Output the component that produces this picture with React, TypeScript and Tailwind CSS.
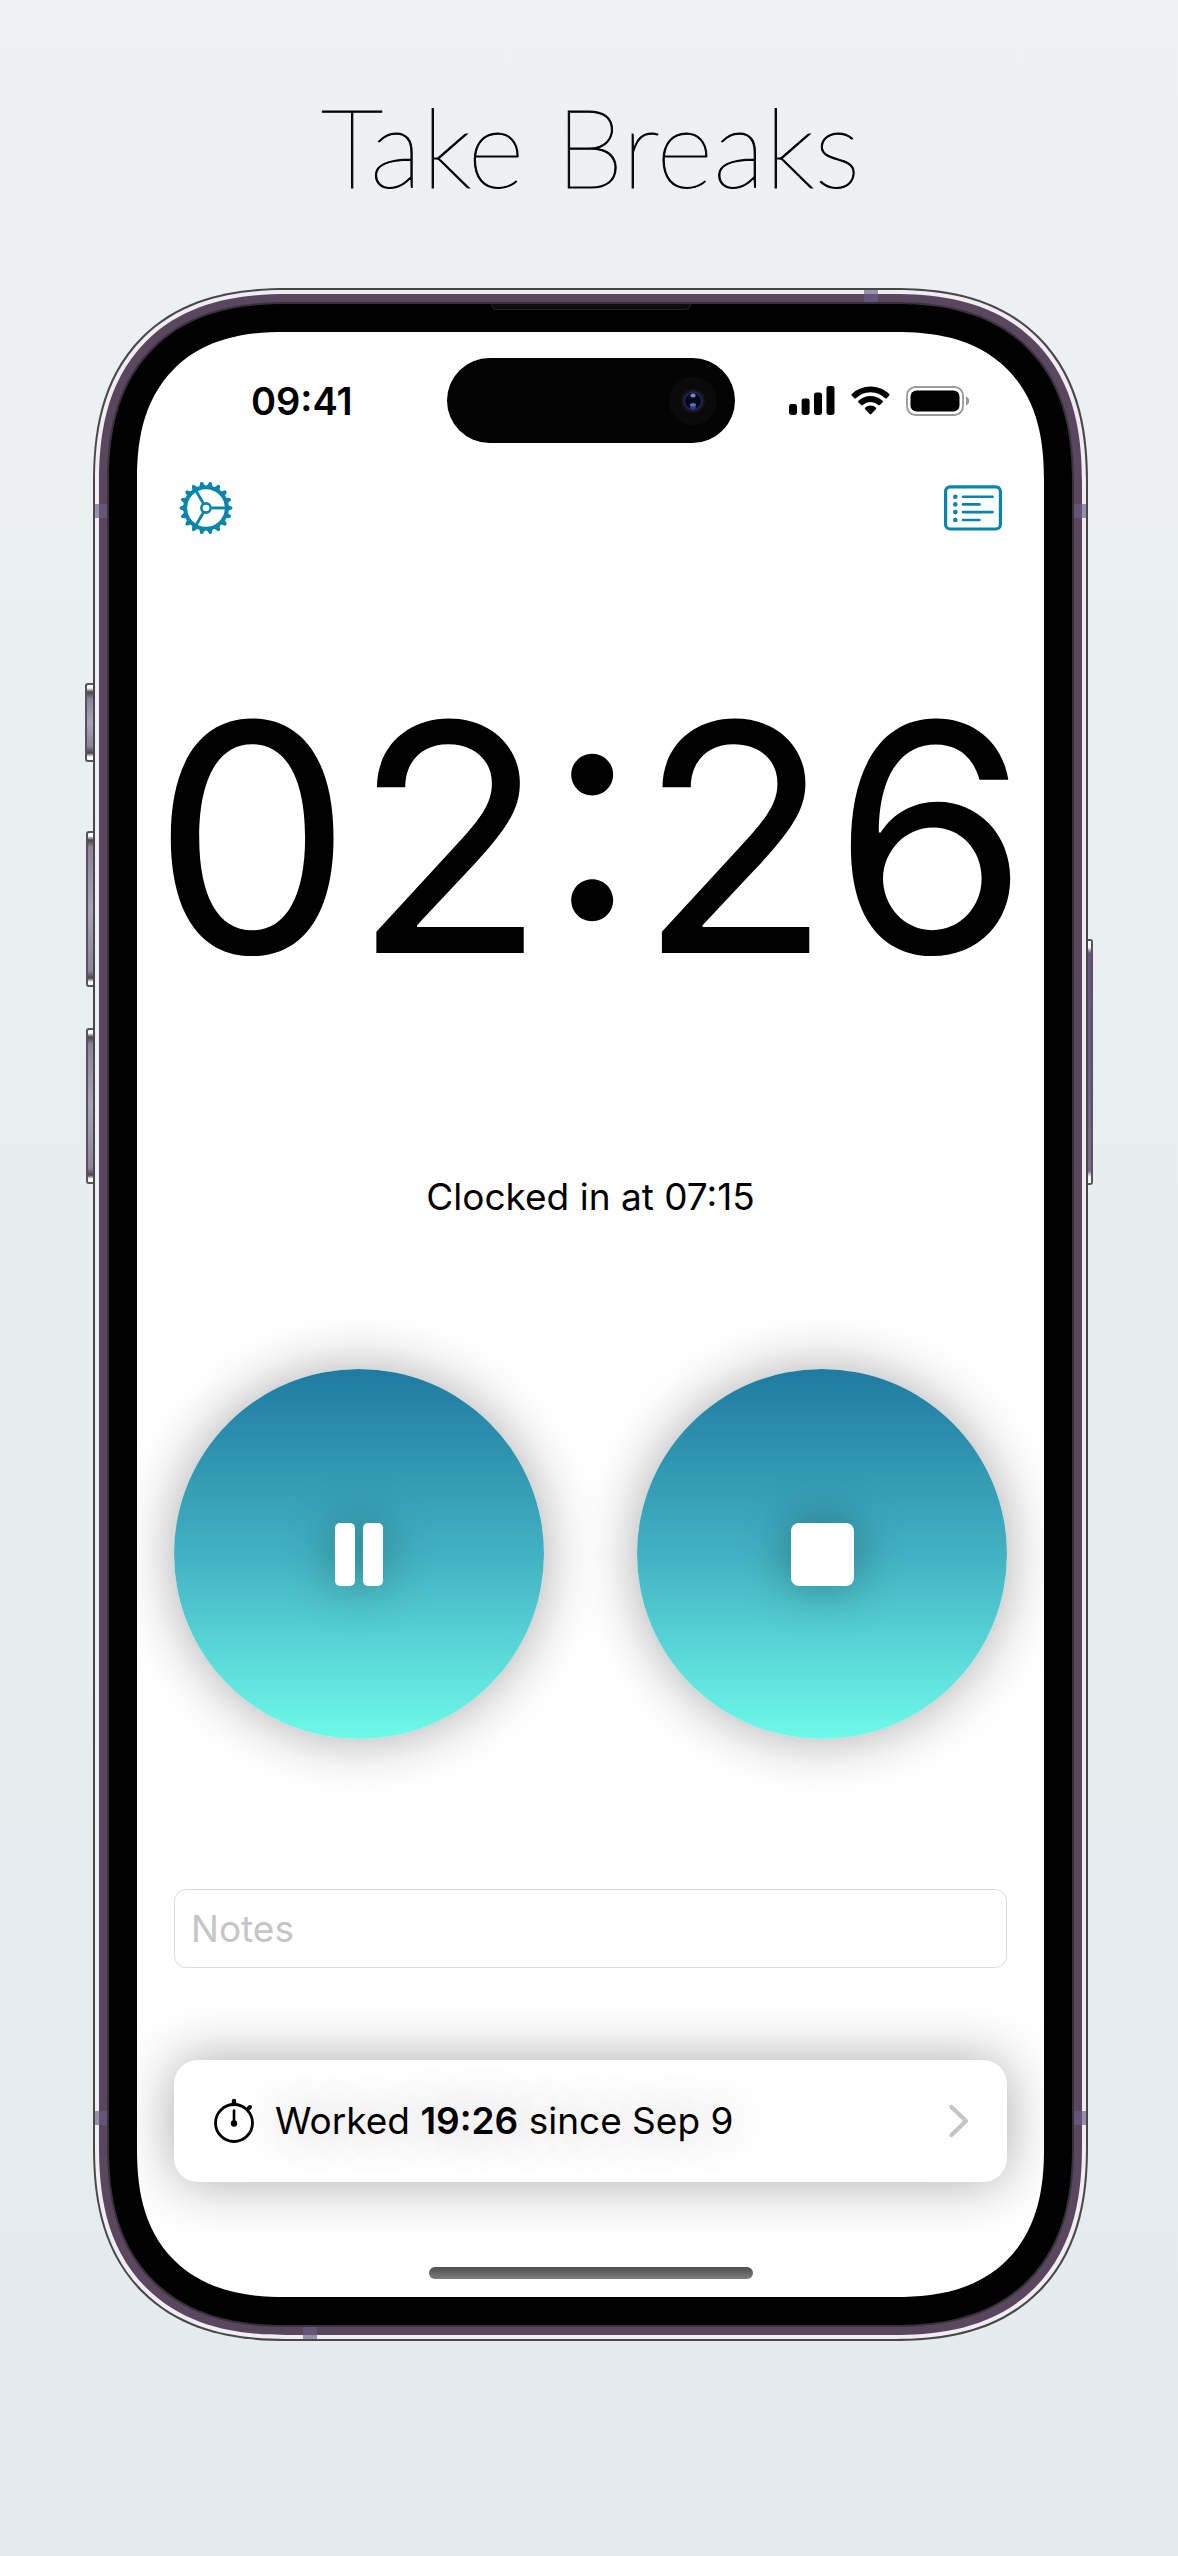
const TEETH = Array.from({ length: 18 }, (_, i) => i * 20);
const SPOKES = [0, 120, 240];

function GearIcon() {
  return (
    <svg viewBox="-27 -27 54 54" className="size-[54px]" fill="none" stroke="currentColor" aria-hidden="true">
      <circle r="20.8" strokeWidth="4" />
      <circle r="4.6" strokeWidth="2.6" />
      {SPOKES.map((a) => (
        <line key={a} x1="5.5" y1="0" x2="20" y2="0" strokeWidth="2.8" transform={`rotate(${a})`} />
      ))}
      {TEETH.map((a) => (
        <path
          key={a}
          d="M21.5 -2.4 L25.6 -0.7 V0.7 L21.5 2.4 Z"
          fill="currentColor"
          strokeWidth="1.4"
          strokeLinejoin="round"
          transform={`rotate(${a})`}
        />
      ))}
    </svg>
  );
}

function ListIcon() {
  return (
    <svg viewBox="0 0 58 46" className="h-[46px] w-[58px]" fill="none" stroke="currentColor" aria-hidden="true">
      <rect x="1.6" y="1.8" width="54.8" height="42.2" rx="4.5" strokeWidth="3.2" />
      {[11.7, 19.4, 27.1, 35].map((y, i) => (
        <g key={y}>
          <circle cx="11.3" cy={y} r="2.3" fill="currentColor" stroke="none" />
          <line x1="19" y1={y} x2={i % 2 ? 35.5 : 48.5} y2={y} strokeWidth="2.6" strokeLinecap="round" />
        </g>
      ))}
    </svg>
  );
}

function StatusIcons() {
  return (
    <div className="flex items-center gap-4 pr-5">
      <svg viewBox="0 0 46 29" className="h-[29px] w-[46px]" role="img" aria-label="Signal">
        <rect x="0" y="18" width="8" height="11" rx="2.4" />
        <rect x="12.6" y="12.5" width="8" height="16.5" rx="2.4" />
        <rect x="25" y="6.5" width="8" height="22.5" rx="2.4" />
        <rect x="37.5" y="0" width="8" height="29" rx="2.4" />
      </svg>
      <svg viewBox="0 0 39 29" className="h-[29px] w-[39px]" role="img" aria-label="Wi-Fi">
        <path d="M19.5 0.5c7.2 0 13.8 2.9 18.7 7.5.5.5.5 1.1 0 1.6l-2.5 2.6c-.4.4-1.1.4-1.6 0A21.3 21.3 0 0 0 19.5 6.2 21.3 21.3 0 0 0 4.9 12.2c-.5.4-1.2.4-1.6 0L.8 9.6c-.5-.5-.5-1.1 0-1.6A27.3 27.3 0 0 1 19.5.5Z" />
        <path d="M19.5 10c4.6 0 8.8 1.8 12 4.8.5.4.5 1.1 0 1.6l-2.7 2.6c-.4.4-1.1.4-1.5 0a11.4 11.4 0 0 0-15.6 0c-.4.4-1.1.4-1.5 0l-2.7-2.6c-.5-.5-.5-1.2 0-1.6a17.4 17.4 0 0 1 12-4.8Z" />
        <path d="M19.5 19.5c2 0 3.9.8 5.3 2.1.5.4.5 1.1 0 1.6l-4.5 4.9c-.4.5-1.2.5-1.6 0l-4.5-4.9c-.5-.5-.5-1.2 0-1.6a7.7 7.7 0 0 1 5.3-2.1Z" />
      </svg>
      <svg viewBox="0 0 64 30" className="h-[30px] w-16" role="img" aria-label="Battery">
        <rect x="1" y="1" width="56" height="28" rx="8.5" fill="none" stroke="#9a9a9a" strokeWidth="1.8" />
        <rect x="4.5" y="4.5" width="49" height="21" rx="6" />
        <path d="M60 10.5c2 .8 3.2 2.5 3.2 4.5s-1.2 3.7-3.2 4.5Z" fill="#9a9a9a" />
      </svg>
    </div>
  );
}

function StatusBar() {
  return (
    <div className="grid grid-cols-[1fr_288px_1fr] items-center pt-[26px]">
      <span className="pl-5 text-center text-[38px] leading-[44px] font-semibold">09:41</span>
      <div className="flex h-[85px] items-center justify-end rounded-full bg-[#030303] pr-[18px]">
        <svg viewBox="-24 -24 48 48" className="size-12" aria-hidden="true">
          <circle r="24" fill="#0a0a0a" />
          <circle r="12" fill="#151515" />
          <circle r="8.8" fill="#06061a" stroke="#1c2560" strokeWidth="1.8" />
          <ellipse cy="-5.6" rx="2.6" ry="2" fill="#8a86b8" />
          <ellipse cy="6" rx="3" ry="2.4" fill="#4a2a90" />
          <ellipse cy="3.8" rx="3" ry="1.8" fill="#3f7fa8" />
        </svg>
      </div>
      <div className="flex justify-center">
        <StatusIcons />
      </div>
    </div>
  );
}

const roundButton =
  "flex aspect-square w-[370px] items-center justify-center rounded-full bg-linear-to-b from-[#1f7ba0] via-[#42b1c2] to-[#6ffaea] shadow-[0_0_56px_rgba(0,0,0,0.34)]";
const glyphShadow = "drop-shadow-[0_0_24px_rgba(0,0,0,0.34)]";

function Screen() {
  return (
    <div className="overflow-hidden rounded-[121px] bg-white pb-[18px] supports-[corner-shape:squircle]:rounded-[148px] supports-[corner-shape:squircle]:[corner-shape:superellipse(1.27)]">
      <StatusBar />
      <nav className="mt-[38px] flex items-center justify-between px-[42px] text-[#0785aa]">
        <button type="button" aria-label="Settings">
          <GearIcon />
        </button>
        <button type="button" aria-label="Timesheet">
          <ListIcon />
        </button>
      </nav>
      <p className="mt-[153px] text-center text-[318px] leading-[300px] whitespace-nowrap">02:26</p>
      <div className="flex flex-col px-[37px]">
        <p className="mt-[185px] text-center text-[37px] leading-[48px]">Clocked in at 07:15</p>
        <div className="mt-[148px] flex justify-between">
          <button type="button" aria-label="Pause" className={roundButton}>
            <svg viewBox="0 0 48 63" className={`h-[63px] w-12 ${glyphShadow}`} fill="#fff" aria-hidden="true">
              <rect x="0" width="20" height="63" rx="5" />
              <rect x="28" width="20" height="63" rx="5" />
            </svg>
          </button>
          <button type="button" aria-label="Stop" className={roundButton}>
            <svg viewBox="0 0 63 63" className={`size-[63px] ${glyphShadow}`} fill="#fff" aria-hidden="true">
              <rect width="63" height="63" rx="8" />
            </svg>
          </button>
        </div>
        <input
          type="text"
          aria-label="Notes"
          placeholder="Notes"
          className="mt-[150px] h-[79px] w-full rounded-xl border border-[#dcdcdc] px-4 text-[37px] outline-none placeholder:text-[#c5c5c7]"
        />
        <button
          type="button"
          className="mt-[92px] flex h-[122px] items-center rounded-3xl bg-white pr-[38px] pl-[39px] text-left text-[37px] shadow-[0_0_56px_rgba(0,0,0,0.34)]"
        >
          <svg viewBox="0 0 42 46" className="h-[46px] w-[42px]" fill="none" stroke="#000" strokeLinecap="round" aria-hidden="true">
            <circle cx="21" cy="25" r="18.5" strokeWidth="2.8" />
            <line x1="21" y1="3" x2="21" y2="6" strokeWidth="4.5" />
            <line x1="35.5" y1="10.5" x2="37" y2="9" strokeWidth="4" />
            <line x1="21" y1="12.5" x2="21" y2="25" strokeWidth="2.6" />
            <circle cx="21" cy="25.5" r="3.2" fill="#000" stroke="none" />
          </svg>
          <span className="ml-5 flex-1 [text-shadow:0_0_48px_rgba(0,0,0,0.34)]">
            Worked <strong className="font-semibold">19:26</strong> since Sep 9
          </span>
          <svg viewBox="0 0 20 34" className="h-[34px] w-5" fill="none" stroke="#c4c4c6" strokeWidth="4.2" strokeLinecap="round" strokeLinejoin="round" aria-hidden="true">
            <path d="M2.5 3 17 17 2.5 31" />
          </svg>
        </button>
      </div>
      <div className="mx-auto mt-[85px] h-3 w-[324px] rounded-full bg-linear-to-b from-[#505050] to-[#7c7c7c]" />
    </div>
  );
}

const sideButton =
  "absolute rounded-l-[3px] border-2 border-r-0 border-[#55555a] bg-[linear-gradient(to_bottom,#fff_3px,#4a4452_7px,#8d8299_14px,#a8a2bb_50%,#8d8299_calc(100%-14px),#4a4452_calc(100%-7px),#fff_calc(100%-3px))]";
const band = "absolute bg-[#6a5f86]/65";

function Phone() {
  return (
    <div className="relative">
      <div className={`${sideButton} top-[395px] -left-2 h-[79px] w-2.5`} />
      <div className={`${sideButton} top-[543px] -left-[7px] h-[156px] w-2.5`} />
      <div className={`${sideButton} top-[740px] -left-[7px] h-[156px] w-2.5`} />
      <div className="absolute top-[651px] -right-[5px] h-[246px] w-2.5 rounded-r-[3px] border-2 border-l-0 border-[#55555a] bg-[linear-gradient(to_bottom,#fff_6px,#66557c_12px,#6a5c88_50%,#7c6a8a_calc(100%-12px),#fff_calc(100%-6px))]" />
      <div className="relative rounded-[165px] border-2 border-[#48484a] bg-[#f0edf1] p-1 supports-[corner-shape:squircle]:rounded-[195px] supports-[corner-shape:squircle]:[corner-shape:superellipse(1.27)]">
        <div className="rounded-[159px] bg-[#5a475f] p-2 supports-[corner-shape:squircle]:rounded-[189px] supports-[corner-shape:squircle]:[corner-shape:superellipse(1.27)]">
          <div className="rounded-[151px] bg-[#363338] p-0.5 supports-[corner-shape:squircle]:rounded-[181px] supports-[corner-shape:squircle]:[corner-shape:superellipse(1.27)]">
            <div className="rounded-[149px] bg-black p-7 supports-[corner-shape:squircle]:rounded-[179px] supports-[corner-shape:squircle]:[corner-shape:superellipse(1.27)]">
              <Screen />
            </div>
          </div>
        </div>
        <div className={`${band} top-[214px] left-0 h-3.5 w-3`} />
        <div className={`${band} top-[214px] right-0 h-3.5 w-3`} />
        <div className={`${band} bottom-[214px] left-0 h-3.5 w-3`} />
        <div className={`${band} right-0 bottom-[214px] h-3.5 w-3`} />
        <div className={`${band} top-0 right-[208px] h-3 w-3.5`} />
        <div className={`${band} bottom-0 left-[208px] h-3 w-3.5`} />
        <div className="absolute top-[14px] left-1/2 h-1.5 w-[200px] -translate-x-1/2 rounded-b-md border-x border-b border-[#222224] bg-[#0c0c0c]" />
      </div>
    </div>
  );
}

export default function App() {
  return (
    <main className="min-h-screen bg-linear-to-b from-[#edf1f4] to-[#e4eaed] pr-[90px] pb-[215px] pl-[93px] font-[Inter,'Liberation_Sans',sans-serif] text-black">
      <h1 className="pt-[75px] pb-[73px] text-center font-[Lato,'Liberation_Sans',sans-serif] text-[110px] leading-[140px] font-thin [-webkit-text-stroke:1px_black]">
        Take Breaks
      </h1>
      <Phone />
    </main>
  );
}
